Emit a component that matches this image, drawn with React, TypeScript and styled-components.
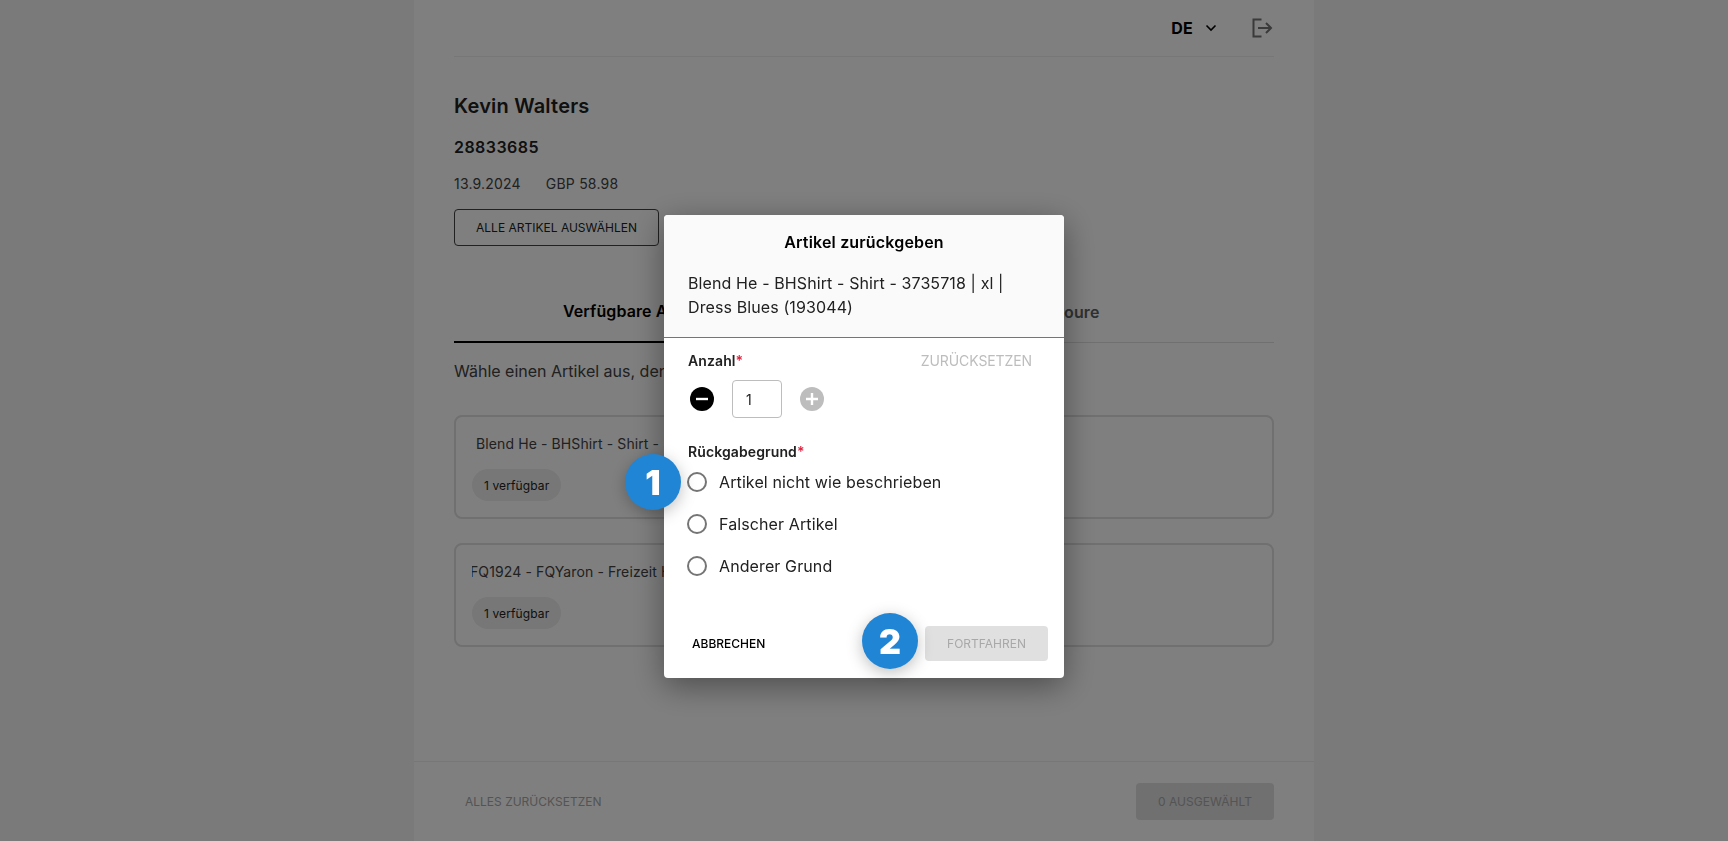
import React from "react";
import styled, { createGlobalStyle } from "styled-components";

const Global = createGlobalStyle`
  html, body { margin: 0; padding: 0; height: 100%; background: #f5f5f5; overflow: hidden; }
  body { font-family: Inter, "Noto Sans", sans-serif; color: #212121; letter-spacing: 0.11px; -webkit-font-smoothing: antialiased; }
  * { box-sizing: border-box; }
  #root { height: 100%; }
`;

const Page = styled.div`
  height: 841px;
  display: flex;
  justify-content: center;
`;
const Panel = styled.div`
  width: 900px;
  height: 841px;
  background: #fff;
  display: flex;
  flex-direction: column;
`;
const Main = styled.main`
  flex: 1;
  padding: 0 40px;
  display: flex;
  flex-direction: column;
  min-height: 0;
`;
const TopBar = styled.header`
  height: 57px;
  flex: none;
  border-bottom: 1px solid #eeeeee;
  display: flex;
  align-items: center;
  justify-content: flex-end;
  padding-bottom: 1px;
`;
const Lang = styled.span`
  font-size: 16px;
  font-weight: 700;
  color: #000;
  line-height: 20px;
  letter-spacing: 0.3px;
`;
const Chevron = styled.svg`
  width: 12px;
  height: 8px;
  margin-left: 12px;
  margin-right: 35px;
`;
const LogoutIcon = styled.svg`
  width: 21px;
  height: 20px;
  margin-right: 1px;
`;
const CustomerName = styled.h1`
  margin: 37px 0 0;
  font-size: 20px;
  line-height: 24px;
  font-weight: 600;
  letter-spacing: 0.2px;
  color: #212121;
`;
const OrderNo = styled.h2`
  margin: 19px 0 0;
  font-size: 16px;
  line-height: 20px;
  font-weight: 600;
  letter-spacing: 0.45px;
  color: #212121;
`;
const Meta = styled.div`
  margin-top: 17px;
  display: flex;
  gap: 25px;
  font-size: 14px;
  line-height: 20px;
  letter-spacing: 0.2px;
  color: #424242;
`;
const OutlineButton = styled.button`
  margin-top: 15px;
  width: 205px;
  height: 37px;
  padding: 0;
  border: 1px solid #424242;
  border-radius: 4px;
  background: transparent;
  font: 400 12px/16px Inter, sans-serif;
  letter-spacing: 0;
  color: #212121;
`;
const Tabs = styled.div`
  margin-top: 26px;
  display: grid;
  grid-template-columns: 1fr 1fr;
  border-bottom: 1px solid #e0e0e0;
  height: 71px;
`;
const Tab = styled.div<{ $active?: boolean }>`
  display: flex;
  align-items: center;
  justify-content: center;
  height: 71px;
  padding: 8px ${(p) => (p.$active ? 48 : 0)}px 0 0;
  font-size: 16px;
  font-weight: 600;
  color: ${(p) => (p.$active ? "#000" : "#616161")};
  border-bottom: ${(p) => (p.$active ? "2px solid #000" : "none")};
`;
const Hint = styled.p`
  margin: 16px 0 0;
  font-size: 16px;
  line-height: 24px;
  letter-spacing: 0;
  color: #424242;
  white-space: nowrap;
`;
const CardList = styled.div`
  margin-top: 32px;
  display: flex;
  flex-direction: column;
  gap: 24px;
`;
const Card = styled.div`
  height: 104px;
  border: 2px solid #e0e0e0;
  border-radius: 8px;
  padding: 17px 16px 0;
`;
const CardTitle = styled.div<{ $shift?: number }>`
  height: 20px;
  overflow: hidden;
  font-size: 14px;
  line-height: 20px;
  white-space: nowrap;
  color: #424242;
  padding-left: ${(p) => p.$shift ?? 0}px;
  text-indent: ${(p) => (p.$shift ? 0 : -2)}px;
`;
const Chip = styled.span`
  display: flex;
  width: fit-content;
  align-items: center;
  margin-top: 15px;
  height: 32px;
  padding: 0 12px;
  border-radius: 16px;
  background: #eeeeee;
  font-size: 12px;
  color: #212121;
`;
const Footer = styled.footer`
  flex: none;
  height: 80px;
  border-top: 1px solid #eeeeee;
  padding: 0 40px 0 51px;
  display: flex;
  align-items: center;
  justify-content: space-between;
`;
const FooterLink = styled.span`
  font-size: 12px;
  font-weight: 400;
  letter-spacing: 0;
  color: #a8a8a8;
`;
const FooterButton = styled.button`
  width: 138px;
  height: 37px;
  border: 0;
  border-radius: 4px;
  background: #e0e0e0;
  font: 400 12px Inter, sans-serif;
  letter-spacing: 0.05px;
  color: #a8a8a8;
`;
const Overlay = styled.div`
  position: fixed;
  inset: 0;
  background: rgba(0, 0, 0, 0.5);
  display: flex;
  justify-content: center;
  align-items: flex-start;
  padding-top: 215px;
`;
const Modal = styled.div`
  position: relative;
  width: 400px;
  height: 463px;
  background: #fff;
  border-radius: 4px;
  box-shadow: 0 8px 32px rgba(0, 0, 0, 0.4);
  display: flex;
  flex-direction: column;
`;
const ModalHead = styled.div`
  flex: none;
  height: 123px;
  background: #fafafa;
  border-bottom: 1px solid #757575;
  border-radius: 4px 4px 0 0;
  padding: 15px 24px 0;
`;
const ModalTitle = styled.h3`
  margin: 0;
  text-align: center;
  font-size: 16px;
  line-height: 24px;
  font-weight: 600;
  letter-spacing: 0.17px;
  color: #000;
`;
const ItemName = styled.p`
  margin: 17px 0 0;
  font-size: 16px;
  line-height: 24px;
  color: #212121;
`;
const ModalBody = styled.div`
  flex: 1;
  padding: 13px 24px 0;
  display: flex;
  flex-direction: column;
`;
const QtyHead = styled.div`
  display: flex;
  justify-content: space-between;
  align-items: center;
  padding-right: 8px;
`;
const FieldLabel = styled.label`
  font-size: 14px;
  line-height: 20px;
  font-weight: 600;
  color: #212121;
  & > em { color: #e02440; font-style: normal; }
`;
const ResetLink = styled.span`
  font-size: 14px;
  line-height: 20px;
  letter-spacing: -0.1px;
  color: #bdbdbd;
`;
const Stepper = styled.div`
  margin-top: 9px;
  display: flex;
  align-items: center;
  height: 38px;
  padding-left: 2px;
`;
const RoundIcon = styled.svg`
  width: 24px;
  height: 24px;
  flex: none;
`;
const QtyBox = styled.div`
  width: 50px;
  height: 38px;
  margin: 0 18px;
  padding-left: 13px;
  border: 1px solid #bdbdbd;
  border-radius: 4px;
  display: flex;
  align-items: center;
  font-size: 14px;
  color: #212121;
`;
const ReasonLabel = styled(FieldLabel)`
  margin-top: 24px;
`;
const Radios = styled.div`
  margin-top: -1px;
  display: flex;
  flex-direction: column;
`;
const RadioRow = styled.div`
  height: 42px;
  display: flex;
  align-items: center;
  gap: 12px;
  font-size: 16px;
  color: #212121;
`;
const RadioDot = styled.span`
  width: 20px;
  height: 20px;
  margin-left: -1px;
  border: 2px solid #757575;
  border-radius: 50%;
  flex: none;
`;
const ModalFoot = styled.div`
  flex: none;
  height: 52px;
  padding: 0 16px 0 28px;
  display: flex;
  justify-content: space-between;
  align-items: flex-start;
`;
const CancelButton = styled.button`
  border: 0;
  padding: 0;
  height: 35px;
  background: none;
  font: 500 12px Inter, sans-serif;
  color: #000;
`;
const ContinueButton = styled.button`
  width: 123px;
  height: 35px;
  border: 0;
  border-radius: 4px;
  background: #e0e0e0;
  font: 400 12px Inter, sans-serif;
  letter-spacing: 0;
  color: #a8a8a8;
`;
const StepBadge = styled.div<{ $left: number; $top: number }>`
  position: absolute;
  left: ${(p) => p.$left}px;
  top: ${(p) => p.$top}px;
  width: 56px;
  height: 56px;
  border-radius: 50%;
  background: #2185d5;
  color: #fff;
  display: flex;
  align-items: center;
  justify-content: center;
  font-size: 34px;
  font-weight: 900;
  box-shadow: 0 4px 16px rgba(0, 0, 0, 0.25);
`;

export default function App() {
  return (
    <>
      <Global />
      <Page>
        <Panel>
          <Main>
            <TopBar>
              <Lang>DE</Lang>
              <Chevron viewBox="0 0 12 8">
                <path d="M1.5 1.5 6 6l4.5-4.5" fill="none" stroke="#000" strokeWidth="1.6" />
              </Chevron>
              <LogoutIcon viewBox="0 0 21 20">
                <path
                  d="M9.5 1.5H1.5v17h8M6 10h13M14 5l5 5-5 5"
                  fill="none"
                  stroke="#757575"
                  strokeWidth="2"
                />
              </LogoutIcon>
            </TopBar>
            <CustomerName>Kevin Walters</CustomerName>
            <OrderNo>28833685</OrderNo>
            <Meta>
              <span>13.9.2024</span>
              <span>GBP 58.98</span>
            </Meta>
            <OutlineButton>ALLE ARTIKEL AUSWÄHLEN</OutlineButton>
            <Tabs>
              <Tab $active>Verfügbare Artikel</Tab>
              <Tab>Retoure</Tab>
            </Tabs>
            <Hint>Wähle einen Artikel aus, den du zurückgeben möchtest.</Hint>
            <CardList>
              <Card>
                <CardTitle $shift={4}>Blend He - BHShirt - Shirt - 3735718 | xl | Dress Blues (193044)</CardTitle>
                <Chip>1 verfügbar</Chip>
              </Card>
              <Card>
                <CardTitle>FQ1924 - FQYaron - Freizeit Hemd</CardTitle>
                <Chip>1 verfügbar</Chip>
              </Card>
            </CardList>
          </Main>
          <Footer>
            <FooterLink>ALLES ZURÜCKSETZEN</FooterLink>
            <FooterButton>0 AUSGEWÄHLT</FooterButton>
          </Footer>
        </Panel>
      </Page>
      <Overlay>
        <Modal>
          <ModalHead>
            <ModalTitle>Artikel zurückgeben</ModalTitle>
            <ItemName>Blend He - BHShirt - Shirt - 3735718 | xl | Dress Blues (193044)</ItemName>
          </ModalHead>
          <ModalBody>
            <QtyHead>
              <FieldLabel>
                Anzahl<em>*</em>
              </FieldLabel>
              <ResetLink>ZURÜCKSETZEN</ResetLink>
            </QtyHead>
            <Stepper>
              <RoundIcon viewBox="0 0 24 24">
                <circle cx="12" cy="12" r="12" fill="#000" />
                <path d="M6 12h12" stroke="#fff" strokeWidth="2.4" />
              </RoundIcon>
              <QtyBox>1</QtyBox>
              <RoundIcon viewBox="0 0 24 24">
                <circle cx="12" cy="12" r="12" fill="#bdbdbd" />
                <path d="M6 12h12M12 6v12" stroke="#fff" strokeWidth="2.4" />
              </RoundIcon>
            </Stepper>
            <ReasonLabel>
              Rückgabegrund<em>*</em>
            </ReasonLabel>
            <Radios>
              <RadioRow>
                <RadioDot />
                Artikel nicht wie beschrieben
              </RadioRow>
              <RadioRow>
                <RadioDot />
                Falscher Artikel
              </RadioRow>
              <RadioRow>
                <RadioDot />
                Anderer Grund
              </RadioRow>
            </Radios>
          </ModalBody>
          <ModalFoot>
            <CancelButton>ABBRECHEN</CancelButton>
            <ContinueButton>FORTFAHREN</ContinueButton>
          </ModalFoot>
          <StepBadge $left={-39} $top={239}>1</StepBadge>
          <StepBadge $left={198} $top={398}>2</StepBadge>
        </Modal>
      </Overlay>
    </>
  );
}
